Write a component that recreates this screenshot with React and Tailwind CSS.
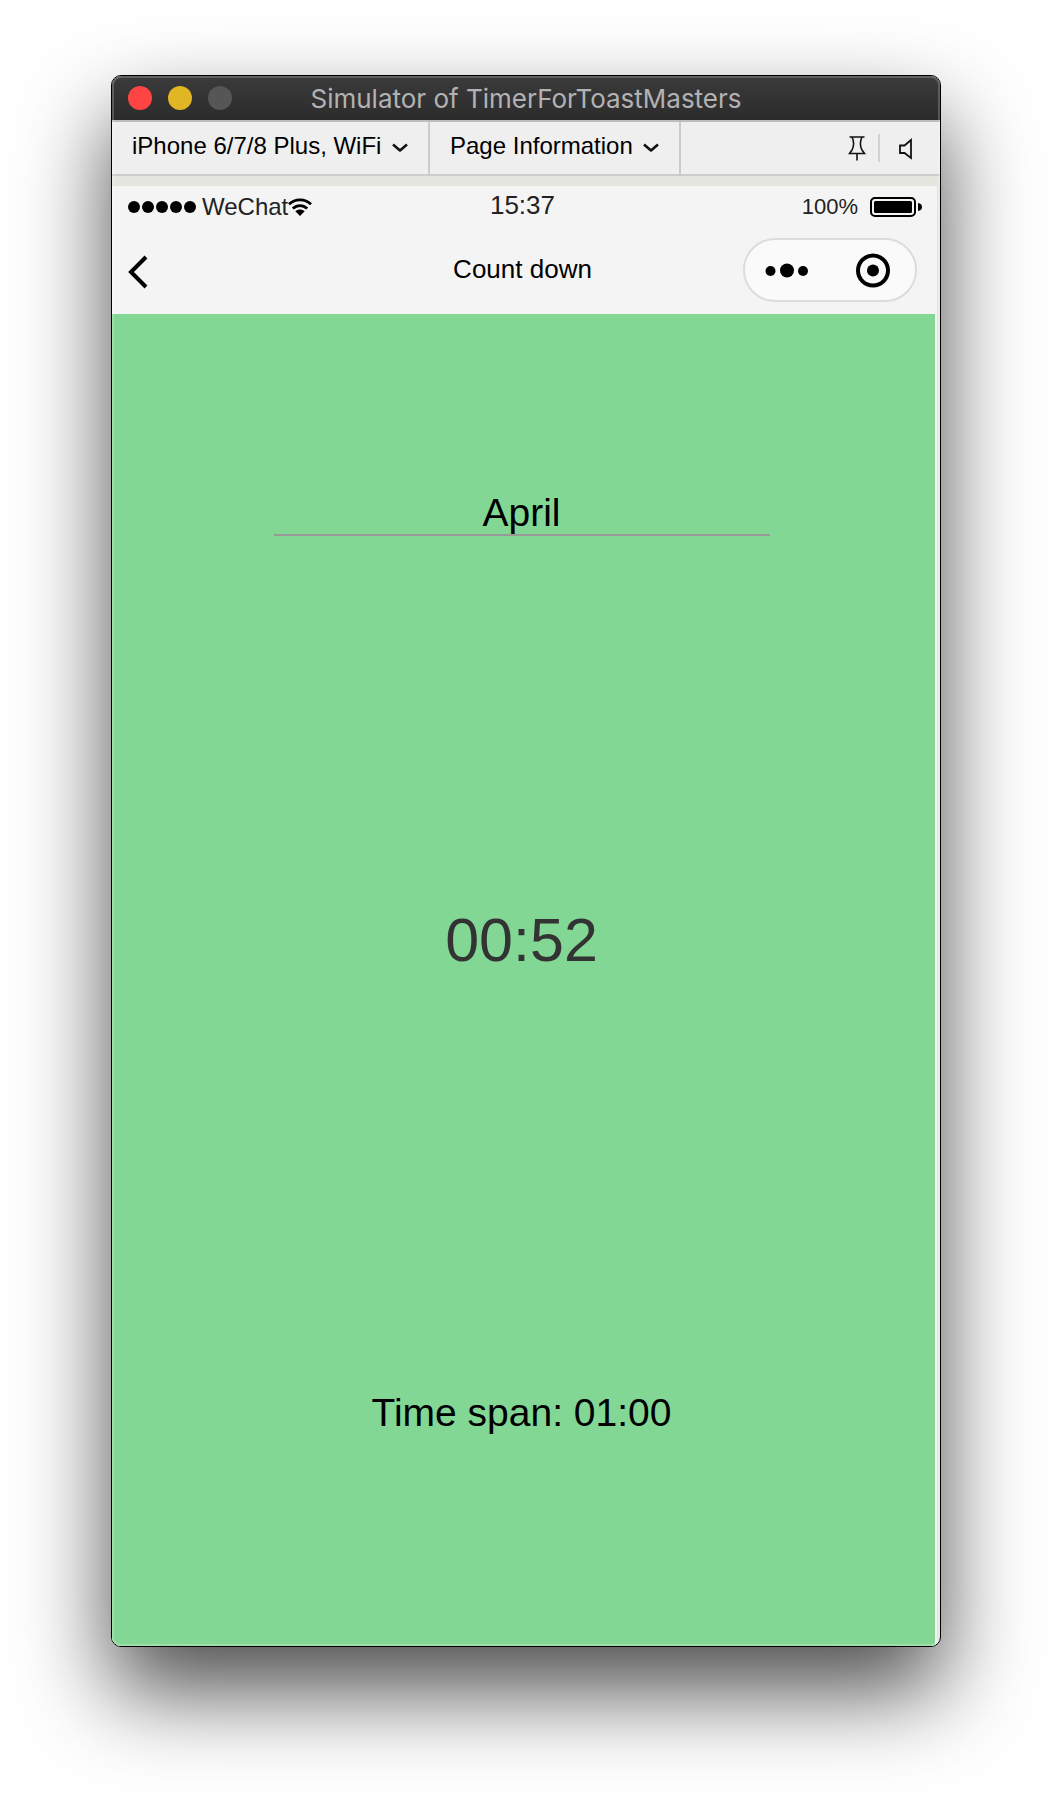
import React from "react";

function Chevron() {
  return (
    <svg className="pointer-events-none absolute right-5 h-4 w-4" viewBox="0 0 16 16" fill="none" stroke="#111" strokeWidth="2.6" aria-hidden="true">
      <path d="M1 4.5 L8 10.5 L15 4.5" strokeLinejoin="round" />
    </svg>
  );
}

function ToolbarSelect({ label, value }) {
  return (
    <div className="relative flex items-center border-r-2 border-[#cccccc]">
      <select
        aria-label={label}
        defaultValue={value}
        className="h-full appearance-none bg-transparent pr-[46px] pb-1 pl-5 text-2xl text-black outline-none"
      >
        <option>{value}</option>
      </select>
      <Chevron />
    </div>
  );
}

function TitleBar() {
  return (
    <header className="grid h-[46px] grid-cols-[1fr_auto_1fr] items-center border-b-2 border-[#bdbdbd] bg-linear-to-b from-[#3c3b3c] to-[#2c2b2c] px-4">
      <div className="flex gap-4">
        <button aria-label="Close" className="size-6 rounded-full bg-[#ff4543]" />
        <button aria-label="Minimize" className="size-6 rounded-full bg-[#e0b624]" />
        <button aria-label="Zoom" className="size-6 rounded-full bg-[#575657]" />
      </div>
      <h1 className="pt-0.5 font-[Inter,sans-serif] text-[26px] leading-8 text-[#b3b2b3]">Simulator of TimerForToastMasters</h1>
    </header>
  );
}

function Toolbar() {
  return (
    <div className="flex h-[54px] border-b-2 border-[#cccccc] bg-[#efefef]">
      <ToolbarSelect label="Device and network" value="iPhone 6/7/8 Plus, WiFi" />
      <ToolbarSelect label="Page details" value="Page Information" />
      <div className="ml-auto flex items-center pr-[26px]">
        <button aria-label="Pin window" className="pr-3">
          <svg className="h-7 w-[18px]" viewBox="0 0 18 28" fill="none" stroke="#111" strokeWidth="1.6" aria-hidden="true">
            <path d="M1.5 3 H16.5 M4 3 C6 7 6 12 4 16 L1.5 19.5 H16.5 L14 16 C12 12 12 7 14 3 M9 19.5 V26.5" />
          </svg>
        </button>
        <div className="h-7 w-0.5 bg-[#d2d2d2]" />
        <button aria-label="Mute" className="pl-[18px]">
          <svg className="h-6 w-4" viewBox="0 0 16 24" fill="none" stroke="#111" strokeWidth="1.8" aria-hidden="true">
            <path d="M2 9.5 H6.5 L13 4 V22 L6.5 17 H2 Z" />
          </svg>
        </button>
      </div>
    </div>
  );
}

function StatusBar() {
  return (
    <div className="grid h-10 grid-cols-[1fr_auto_1fr] items-center pr-5 pl-4 text-[#222]">
      <div className="flex items-center">
        <div className="flex gap-0.5">
          {[0, 1, 2, 3, 4].map((i) => (
            <span key={i} className="size-3 rounded-full bg-black" />
          ))}
        </div>
        <span className="ml-1.5 text-2xl">WeChat</span>
        <svg className="h-[18px] w-6" viewBox="0 0 24 18" fill="none" stroke="#000" strokeWidth="2.8" aria-hidden="true">
          <path d="M1 6.2 C7 0.3 17 0.3 23 6.2" />
          <path d="M4.8 10.6 C9 6.6 15 6.6 19.2 10.6" />
          <path d="M12 18 L7.3 13.2 C10 11 14 11 16.7 13.2 Z" fill="#000" stroke="none" />
        </svg>
      </div>
      <time className="pb-0.5 text-[26px]">15:37</time>
      <div className="-mr-1.5 flex items-center justify-end">
        <span className="text-[22px]">100%</span>
        <svg className="ml-3 h-5 w-[53px]" viewBox="0 0 53 20" aria-hidden="true">
          <rect x="1" y="1" width="44" height="18" rx="4" fill="none" stroke="#000" strokeWidth="2" />
          <rect x="4" y="4" width="38" height="12" rx="1.5" fill="#000" />
          <path d="M48 6 Q52 6.5 52 10 Q52 13.5 48 14 Z" fill="#000" />
        </svg>
      </div>
    </div>
  );
}

function NavBar() {
  return (
    <nav className="grid h-[88px] grid-cols-[1fr_auto_1fr] items-center pr-5 pl-4 text-black">
      <button aria-label="Back" className="w-6 pt-1">
        <svg className="h-9 w-5" viewBox="0 0 20 36" fill="none" stroke="#000" strokeWidth="4" aria-hidden="true">
          <path d="M18 3 L3 18 L18 33" />
        </svg>
      </button>
      <h2 className="pb-0.5 text-[26px]">Count down</h2>
      <div className="flex h-16 w-[174px] items-center justify-between justify-self-end rounded-full border-2 border-[#dcdcdc] bg-[#fafafa] px-5">
        <button aria-label="More">
          <svg className="h-4 w-[44px]" viewBox="0 0 44 16" aria-hidden="true">
            <circle cx="5.5" cy="9" r="5" />
            <circle cx="22" cy="8.5" r="7" />
            <circle cx="38" cy="9" r="5" />
          </svg>
        </button>
        <button aria-label="Close mini program" className="pr-1">
          <svg className="size-9" viewBox="0 0 36 36" aria-hidden="true">
            <circle cx="18" cy="18.5" r="15" fill="none" stroke="#000" strokeWidth="4" />
            <circle cx="18" cy="18.5" r="6" />
          </svg>
        </button>
      </div>
    </nav>
  );
}

export default function App() {
  return (
    <div className="min-h-screen bg-white px-[111px] pt-[75px] pb-[147px] font-['Liberation_Sans',sans-serif]">
      <div className="relative overflow-hidden rounded-[10px] border border-black bg-[#e6e6e0] shadow-[0_44px_90px_rgba(0,0,0,0.7)]">
        <TitleBar />
        <Toolbar />
        <div className="mt-2.5 mr-[3px] bg-[#f4f4f4]">
          <StatusBar />
          <NavBar />
          <main className="mr-0.5 flex flex-col items-center bg-[#82d795] pt-44 pr-11 pb-[213px] pl-10">
            <input
              aria-label="Speaker name"
              defaultValue="April"
              className="h-[46px] w-full max-w-[496px] border-b-2 border-[#999999] bg-transparent pt-0.5 text-center text-[39px] text-black outline-none"
            />
            <p className="mt-[374px] text-[61px] leading-[60px] text-[#333]">00:52</p>
            <p className="mt-[423px] text-[39px] leading-10 text-black">Time span: 01:00</p>
          </main>
        </div>
        <div className="pointer-events-none absolute inset-0 rounded-[9px] border-2 border-white/20" />
      </div>
    </div>
  );
}
